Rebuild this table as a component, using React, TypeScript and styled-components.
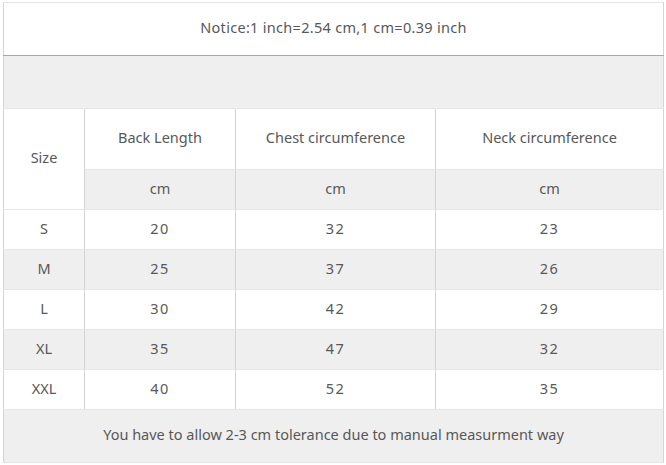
import styled, { createGlobalStyle } from "styled-components";

const GlobalStyle = createGlobalStyle`
  body {
    margin: 0;
    background: #ffffff;
  }
`;

const Page = styled.div`
  padding: 2px 3px 0 3px;
  width: 666px;
  height: 465px;
  box-sizing: border-box;
  background: #ffffff;
`;

const SizeTable = styled.table`
  width: 660px;
  table-layout: fixed;
  border-collapse: collapse;
  font-family: "Noto Sans", "Open Sans", sans-serif;
  font-size: 14.5px;
  color: #585858;
  border: 1px solid #a8a8a8;
`;

const Cell = styled.td<{ $shade?: boolean; $h: number }>`
  height: ${(p) => p.$h}px;
  padding: 0 0 4px 0;
  text-align: center;
  vertical-align: middle;
  background: ${(p) => (p.$shade ? "#efefef" : "#ffffff")};
  border-left: 1px solid #d4d4d4;
  border-right: 1px solid #d4d4d4;
  border-top: 1px solid #e6e6e6;
  border-bottom: 1px solid #e6e6e6;
  box-sizing: border-box;
`;

const NoticeCell = styled(Cell)`
  border-bottom: 1px solid #a8a8a8;
  letter-spacing: 0.3px;
`;

const Num = styled.span`
  letter-spacing: 1.5px;
`;

const rows = [
  { size: "S", back: "20", chest: "32", neck: "23" },
  { size: "M", back: "25", chest: "37", neck: "26" },
  { size: "L", back: "30", chest: "42", neck: "29" },
  { size: "XL", back: "35", chest: "47", neck: "32" },
  { size: "XXL", back: "40", chest: "52", neck: "35" },
];

export default function App() {
  return (
    <Page>
      <GlobalStyle />
      <SizeTable>
        <colgroup>
          <col style={{ width: 81 }} />
          <col style={{ width: 151 }} />
          <col style={{ width: 200 }} />
          <col style={{ width: 228 }} />
        </colgroup>
        <tbody>
          <tr>
            <NoticeCell colSpan={4} $h={53}>
              Notice:1 inch=2.54 cm,1 cm=0.39 inch
            </NoticeCell>
          </tr>
          <tr>
            <Cell colSpan={4} $h={53} $shade />
          </tr>
          <tr>
            <Cell rowSpan={2} $h={61}>
              Size
            </Cell>
            <Cell $h={61}>Back Length</Cell>
            <Cell $h={61}>Chest circumference</Cell>
            <Cell $h={61}>Neck circumference</Cell>
          </tr>
          <tr>
            <Cell $h={40} $shade>cm</Cell>
            <Cell $h={40} $shade>cm</Cell>
            <Cell $h={40} $shade>cm</Cell>
          </tr>
          {rows.map((r, i) => (
            <tr key={r.size}>
              <Cell $h={40} $shade={i % 2 === 1}>{r.size}</Cell>
              <Cell $h={40} $shade={i % 2 === 1}><Num>{r.back}</Num></Cell>
              <Cell $h={40} $shade={i % 2 === 1}><Num>{r.chest}</Num></Cell>
              <Cell $h={40} $shade={i % 2 === 1}><Num>{r.neck}</Num></Cell>
            </tr>
          ))}
          <tr>
            <Cell colSpan={4} $h={53} $shade>
              You have to allow 2-3 cm tolerance due to manual measurment way
            </Cell>
          </tr>
        </tbody>
      </SizeTable>
    </Page>
  );
}
